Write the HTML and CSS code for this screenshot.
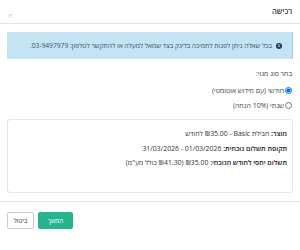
FILE: index.html
```html
<!DOCTYPE html>
<html lang="he" dir="rtl">
<head>
    <meta charset="UTF-8">
    <meta name="viewport" content="width=device-width, initial-scale=1.0">
    <title>רכישה</title>
    <link rel="stylesheet" href="styles.css">
</head>
<body>

    <div class="modal">
        <div class="modal-header">
            <h3>רכישה</h3>
            <span class="close">×</span>
        </div>

        <div class="modal-body">
            <div class="alert">
                <span class="info-icon">i</span>
                <span>בכל שאלה ניתן לפנות לתמיכה בלינק בצד שמאל למעלה או להתקשר לטלפון: 03-9497979.</span>
            </div>

            <p class="plan-label">בחר סוג מנוי:</p>
            <label class="radio-row"><input type="radio" name="plan" checked>חודשי (עם חידוש אוטומטי)</label>
            <label class="radio-row"><input type="radio" name="plan">שנתי (10% הנחה)</label>

            <div class="summary">
                <p><b>מוצר:</b> חבילת <bdi>Basic</bdi> - ₪35.00 לחודש</p>
                <p><b>תקופת תשלום נוכחית:</b> 01/03/2026 - 31/03/2026</p>
                <p><b>תשלום יחסי לחודש הנוכחי:</b> ₪35.00 (₪41.30 כולל מע"מ)</p>
            </div>
        </div>

        <div class="modal-footer">
            <button class="btn btn-primary">המשך</button>
            <button class="btn btn-default">ביטול</button>
        </div>
    </div>

</body>
</html>
```
FILE: styles.css
```css
body {
    margin: 0;
    padding: 0;
    background-color: #fff;
    color: #333;
    font-family: "Open Sans", "DejaVu Sans", sans-serif;
    font-size: 7px;
}

.modal {
    width: 300px;
}

.modal-header {
    display: flex;
    justify-content: space-between;
    align-items: flex-start;
    height: 24px;
    padding: 0 8px;
    border-bottom: 1px solid #e5e5e5;
    box-sizing: border-box;
}

.modal-header h3 {
    margin: 6px 0 0;
    font-size: 7.5px;
    font-weight: 600;
    color: #333;
}

.close {
    margin-top: 11px;
    font-size: 8px;
    line-height: 8px;
    color: #c8c8c8;
}

.modal-body {
    padding: 8px 7px 0;
}

.alert {
    display: flex;
    align-items: center;
    gap: 4px;
    height: 27px;
    padding: 0 10px;
    background-color: #c4e4f3;
    border-right: 1px solid #9fcde3;
    box-sizing: border-box;
    color: #31546b;
    font-size: 6.7px;
}

.info-icon {
    display: inline-flex;
    justify-content: center;
    align-items: center;
    flex-shrink: 0;
    width: 6px;
    height: 6px;
    border-radius: 50%;
    background-color: #1f3f63;
    color: #fff;
    font-size: 5px;
    font-weight: bold;
    font-family: "Liberation Serif", serif;
}

.plan-label {
    margin: 10px 1px 5px;
    font-size: 6.9px;
    color: #444;
}

.radio-row {
    display: flex;
    align-items: center;
    gap: 1px;
    height: 15px;
    font-size: 6.9px;
    color: #444;
}

.radio-row input {
    width: 7px;
    height: 7px;
    margin: 0 1px 0 0;
}

.summary {
    margin-top: 6px;
    height: 74px;
    padding: 9px 5px 0;
    border: 1px solid #e6e6e6;
    border-radius: 3px;
    box-sizing: border-box;
    color: #333;
}

.summary p {
    margin: 0;
    height: 14.5px;
    line-height: 9px;
    font-size: 6.9px;
}

.summary b {
    font-weight: 600;
    color: #222;
}

.modal-footer {
    display: flex;
    justify-content: flex-end;
    gap: 4px;
    margin-top: 8px;
    padding: 10px 7px;
    border-top: 1px solid #e5e5e5;
}

.btn {
    height: 17px;
    padding: 0 5px;
    border-radius: 2px;
    font-family: inherit;
    font-size: 6.3px;
    cursor: pointer;
}

.btn-primary {
    width: 35px;
    background-color: #26b48f;
    border: 1px solid #26b48f;
    color: #fff;
}

.btn-default {
    width: 27px;
    background-color: #fff;
    border: 1px solid #ccc;
    color: #333;
}
```
